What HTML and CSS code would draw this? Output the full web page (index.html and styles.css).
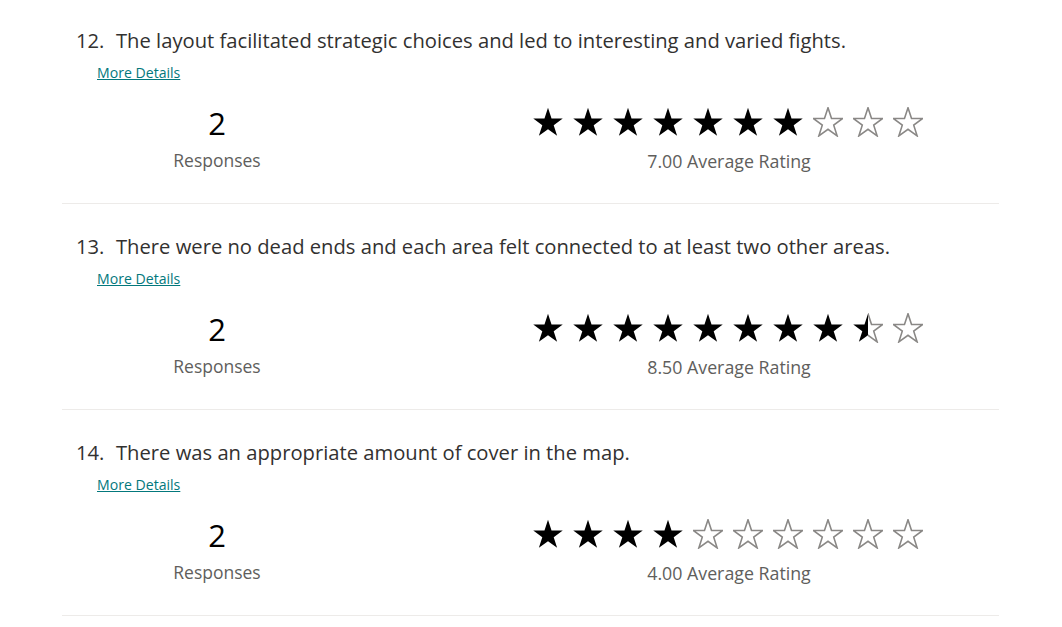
FILE: index.html
```html
<!DOCTYPE html>
<html>
<head>
<meta charset="utf-8">
<link rel="stylesheet" href="styles.css">
</head>
<body>
<svg class="defs" width="0" height="0" aria-hidden="true">
  <defs>
    <symbol id="star" viewBox="0 0 30 30">
      <polygon points="15,0.8 18.53,11.45 29.74,11.51 20.71,18.15 24.11,28.84 15,22.3 5.89,28.84 9.29,18.15 0.26,11.51 11.47,11.45"/>
    </symbol>
    <clipPath id="lefthalf"><rect x="0" y="0" width="15" height="30"/></clipPath>
    <clipPath id="righthalf"><rect x="15" y="0" width="15" height="30"/></clipPath>
  </defs>
</svg>
<main class="results">
  <section class="question">
    <h2 class="q-title"><span class="q-num">12.</span><span class="q-text">The layout facilitated strategic choices and led to interesting and varied fights.</span></h2>
    <a class="details" href="#">More Details</a>
    <div class="stats">
      <div class="responses"><div class="count">2</div><div class="label">Responses</div></div>
      <div class="rating">
        <div class="stars" data-value="7">
          <svg class="star full"><use href="#star"/></svg><svg class="star full"><use href="#star"/></svg><svg class="star full"><use href="#star"/></svg><svg class="star full"><use href="#star"/></svg><svg class="star full"><use href="#star"/></svg><svg class="star full"><use href="#star"/></svg><svg class="star full"><use href="#star"/></svg><svg class="star empty"><use href="#star"/></svg><svg class="star empty"><use href="#star"/></svg><svg class="star empty"><use href="#star"/></svg>
        </div>
        <div class="avg">7.00 Average Rating</div>
      </div>
    </div>
  </section>
  <section class="question">
    <h2 class="q-title"><span class="q-num">13.</span><span class="q-text">There were no dead ends and each area felt connected to at least two other areas.</span></h2>
    <a class="details" href="#">More Details</a>
    <div class="stats">
      <div class="responses"><div class="count">2</div><div class="label">Responses</div></div>
      <div class="rating">
        <div class="stars" data-value="8.5">
          <svg class="star full"><use href="#star"/></svg><svg class="star full"><use href="#star"/></svg><svg class="star full"><use href="#star"/></svg><svg class="star full"><use href="#star"/></svg><svg class="star full"><use href="#star"/></svg><svg class="star full"><use href="#star"/></svg><svg class="star full"><use href="#star"/></svg><svg class="star full"><use href="#star"/></svg><svg class="star half" viewBox="0 0 30 30"><g clip-path="url(#lefthalf)"><use class="half-fill" href="#star" width="30" height="30"/></g><g clip-path="url(#righthalf)"><use class="half-line" href="#star" width="30" height="30"/></g></svg><svg class="star empty"><use href="#star"/></svg>
        </div>
        <div class="avg">8.50 Average Rating</div>
      </div>
    </div>
  </section>
  <section class="question">
    <h2 class="q-title"><span class="q-num">14.</span><span class="q-text">There was an appropriate amount of cover in the map.</span></h2>
    <a class="details" href="#">More Details</a>
    <div class="stats">
      <div class="responses"><div class="count">2</div><div class="label">Responses</div></div>
      <div class="rating">
        <div class="stars" data-value="4">
          <svg class="star full"><use href="#star"/></svg><svg class="star full"><use href="#star"/></svg><svg class="star full"><use href="#star"/></svg><svg class="star full"><use href="#star"/></svg><svg class="star empty"><use href="#star"/></svg><svg class="star empty"><use href="#star"/></svg><svg class="star empty"><use href="#star"/></svg><svg class="star empty"><use href="#star"/></svg><svg class="star empty"><use href="#star"/></svg><svg class="star empty"><use href="#star"/></svg>
        </div>
        <div class="avg">4.00 Average Rating</div>
      </div>
    </div>
  </section>
</main>
</body>
</html>
```
FILE: styles.css
```css
html, body {
  margin: 0;
  padding: 0;
  background: #ffffff;
}
body {
  font-family: "Open Sans", "Noto Sans", "Liberation Sans", sans-serif;
  color: #323130;
  overflow: hidden;
}
.defs {
  position: absolute;
  width: 0;
  height: 0;
}
.results {
  margin-left: 62px;
  width: 937px;
}
.question {
  padding: 28px 0 30px;
  border-bottom: 1px solid #edebe9;
}
.question:first-child {
  padding-top: 26px;
}
.q-title {
  margin: 0;
  padding-left: 14px;
  display: flex;
  font-weight: 400;
  font-size: 20.2px;
  line-height: 28px;
  color: #323130;
}
.q-num {
  width: 40px;
  flex: none;
}
.details {
  display: block;
  width: max-content;
  margin: 9px 0 0 35px;
  font-size: 14.1px;
  line-height: 20px;
  color: #03787c;
  text-decoration: underline;
}
.stats {
  display: flex;
  margin-top: 20px;
}
.responses {
  width: 310px;
  text-align: center;
}
.count {
  font-size: 31px;
  line-height: 40px;
  color: #000000;
}
.label {
  margin-top: 5px;
  font-size: 17.5px;
  line-height: 24px;
  color: #605e5c;
}
.rating {
  margin-left: 161px;
  width: 392px;
  text-align: center;
}
.stars {
  display: flex;
  gap: 10px;
  margin-top: 4px;
  height: 30px;
}
.star {
  width: 30px;
  height: 30px;
  flex: none;
}
.star.full {
  fill: #000000;
}
.star.empty, .half-line {
  fill: none;
  stroke: #8a8886;
  stroke-width: 1.6;
}
.half-fill {
  fill: #000000;
}
.avg {
  margin-top: 12px;
  font-size: 17.8px;
  line-height: 24px;
  color: #605e5c;
}
```
